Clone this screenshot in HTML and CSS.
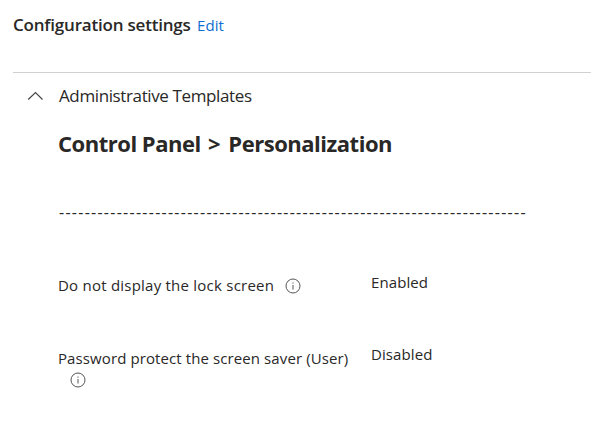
FILE: index.html
```html
<!DOCTYPE html>
<html lang="en">
<head>
<meta charset="utf-8">
<title>Configuration settings</title>
<link rel="stylesheet" href="styles.css">
</head>
<body>
<header class="header"><h1 class="title">Configuration settings</h1><a class="edit">Edit</a></header>
<main class="panel">
<div class="section">
<svg class="chevron" width="16" height="10" viewBox="0 0 16 10"><path d="M1.2 8.5 8.5 1.5l7 7"/></svg>
<span class="section-name">Administrative Templates</span>
</div>
<h2 class="category">Control Panel <span class="arrow">&gt;</span> Personalization</h2>
<div class="divider">-------------------------------------------------------------------------</div>
<dl class="settings">
<div class="row"><dt><span class="label-one">Do not display the lock screen</span> <svg class="info" width="16" height="16" viewBox="0 0 16 16"><circle cx="8" cy="8" r="7"/><path d="M8 7v4.5M8 4.5v1.2"/></svg></dt><dd>Enabled</dd></div>
<div class="row"><dt><span class="label-two">Password protect the screen saver (User)</span> <svg class="info" width="16" height="16" viewBox="0 0 16 16"><circle cx="8" cy="8" r="7"/><path d="M8 7v4.5M8 4.5v1.2"/></svg></dt><dd>Disabled</dd></div>
</dl>
</main>
</body>
</html>
```
FILE: styles.css
```css
* { box-sizing: border-box; }
body { margin: 0; background: #fff; color: #292827; font: 15px/20px "Open Sans", "Noto Sans", sans-serif; overflow: hidden; }
.header { display: flex; height: 72px; padding: 15px 0 0 13px; }
.title { flex: 0 0 184px; margin: 0; font-size: 17px; line-height: 20px; font-weight: 600; letter-spacing: -.2px; white-space: nowrap; }
.edit { color: #0f6fd0; letter-spacing: .1px; }
.panel { margin-left: 13px; border-top: 1px solid #d2d0ce; }
.section { display: flex; align-items: center; padding: 13px 0 0 14px; height: 33px; }
.chevron { margin-right: 16px; fill: none; stroke: #484644; stroke-width: 1.2; }
.section-name { font-size: 17px; letter-spacing: -.38px; white-space: nowrap; }
.category { margin: 22px 0 0 45px; font-size: 22px; line-height: 30px; font-weight: 700; letter-spacing: -.48px; white-space: nowrap; }
.arrow { margin: 0 3px 0 2px; }
.divider { height: 20px; margin: 44px 0 0 46px; font-size: 16px; letter-spacing: 1.26px; white-space: nowrap; }
.settings { margin: 52px 0 0 45px; }
.row { display: grid; grid-template-columns: 300px 1fr; column-gap: 13px; height: 73px; }
.row + .row dd { margin-top: -3px; }
dt { line-height: 22px; }
dd { margin: -2px 0 0; letter-spacing: .1px; }
.label-one { letter-spacing: .23px; }
.label-two { letter-spacing: .1px; }
.info { position: relative; top: -1px; margin-left: 6.5px; vertical-align: -4px; fill: none; stroke: #555; }
.row + .row .info { top: -2px; margin-left: 11.5px; }
```
